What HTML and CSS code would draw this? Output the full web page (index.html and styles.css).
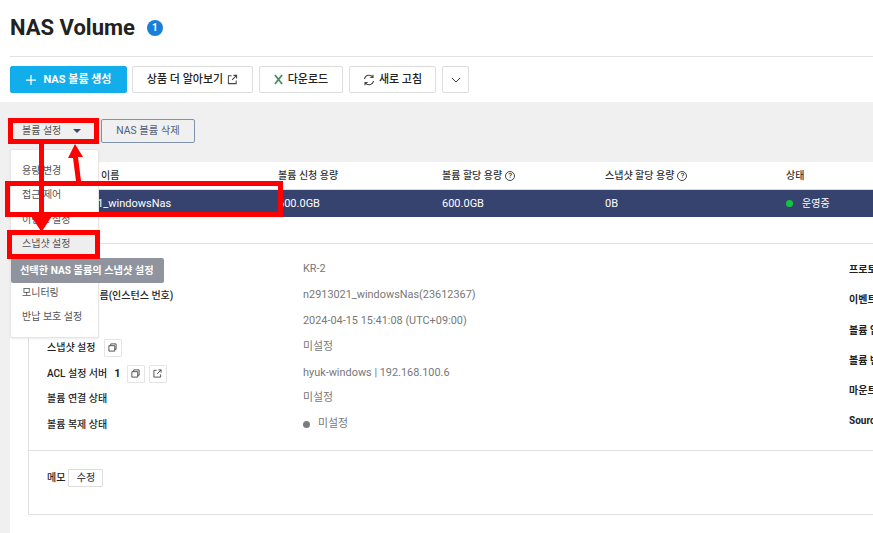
FILE: index.html
```html
<!DOCTYPE html>
<html lang="ko">
<head>
<meta charset="utf-8">
<title>NAS Volume</title>
<link rel="stylesheet" href="styles.css">
</head>
<body>
<div class="page">
  <header class="head">
    <div class="title-row">
      <h1>NAS Volume</h1>
      <span class="badge">1</span>
    </div>
    <div class="toolbar">
      <button class="btn primary"><svg class="plus" viewBox="0 0 12 12"><path d="M6 0v12M0 6h12"/></svg>NAS 볼륨 생성</button>
      <button class="btn w-learn">상품 더 알아보기<svg class="ico small" viewBox="0 0 12 12"><path d="M5 2H1.500v8.500H10V7M7 1.500h3.500V5M10.500 1.500L5.500 6.500"/></svg></button>
      <button class="btn w-down"><svg class="xl" viewBox="0 0 10 12"><path d="M1 1l8 10M9 1L1 11"/></svg>다운로드</button>
      <button class="btn w-refresh"><svg class="ico" viewBox="0 0 12 12"><path d="M1.500 5A4.600 4.600 0 0 1 9.800 3.200M10.500 7A4.600 4.600 0 0 1 2.200 8.800M10 .8v2.700H7.300M2 11.200V8.500h2.700"/></svg>새로 고침</button>
      <button class="btn w-more"><svg class="chev" viewBox="0 0 12 7"><path d="M1 1l5 5 5-5"/></svg></button>
    </div>
  </header>

  <div class="panel">
    <div class="actions">
      <button class="act-setting">볼륨 설정<span class="caret"></span></button>
      <button class="act-delete">NAS 볼륨 삭제</button>
    </div>
    <main class="content">
      <div class="thead">
        <span class="c-name">이름</span>
        <span class="c-a">볼륨 신청 용량</span>
        <span class="c-b">볼륨 할당 용량<i class="q">?</i></span>
        <span class="c-c">스냅샷 할당 용량<i class="q">?</i></span>
        <span>상태</span>
      </div>
      <div class="trow">
        <span class="c-name">n2913021_windowsNas</span>
        <span class="c-a">600.0GB</span>
        <span class="c-b">600.0GB</span>
        <span class="c-c">0B</span>
        <span class="status"><i class="dot green"></i>운영중</span>
      </div>

      <section class="detail">
        <div class="specs">
          <div class="labels">
            <div class="l-row">리전</div>
            <div class="l-row">NAS 볼륨 이름(인스턴스 번호)</div>
            <div class="l-row">생성 일시</div>
            <div class="l-row">스냅샷 설정<span class="sq"><svg viewBox="0 0 10 10"><path d="M1 3h6.500v6H1zM3 3V1h6v6H7.500"/></svg></span></div>
            <div class="l-row">ACL 설정 서버<b class="n">1</b><span class="sq"><svg viewBox="0 0 10 10"><path d="M1 3h6.500v6H1zM3 3V1h6v6H7.500"/></svg></span><span class="sq"><svg viewBox="0 0 10 10"><path d="M4 1.500H1V9h7.500V6M6 1h3v3M9 1L4.500 5.500"/></svg></span></div>
            <div class="l-row">볼륨 연결 상태</div>
            <div class="l-row">볼륨 복제 상태</div>
          </div>
          <div class="values">
            <div class="v-row">KR-2</div>
            <div class="v-row">n2913021_windowsNas(23612367)</div>
            <div class="v-row">2024-04-15 15:41:08 (UTC+09:00)</div>
            <div class="v-row">미설정</div>
            <div class="v-row">hyuk-windows | 192.168.100.6</div>
            <div class="v-row">미설정</div>
            <div class="v-row"><i class="dot gray"></i>미설정</div>
          </div>
          <div class="side">
            <div>프로토콜</div>
            <div>이벤트</div>
            <div>볼륨 암호화</div>
            <div>볼륨 반납</div>
            <div>마운트 정보</div>
            <div>Source</div>
          </div>
        </div>
        <div class="memo">메모<button class="edit">수정</button></div>
      </section>
    </main>
  </div>

  <nav class="menu">
    <div class="m-item">용량 변경</div>
    <div class="m-item">접근 제어</div>
    <div class="m-item">이벤트 설정</div>
    <div class="m-item hover">스냅샷 설정</div>
    <div class="m-item"></div>
    <div class="m-item">모니터링</div>
    <div class="m-item">반납 보호 설정</div>
  </nav>
  <div class="tip">선택한 NAS 볼륨의 스냅샷 설정</div>

  <svg class="marks" viewBox="0 0 873 533">
    <g fill="none" stroke="#f00" stroke-width="5">
      <rect x="10.500" y="120.500" width="86" height="21"/>
      <rect x="7.500" y="183.500" width="273" height="31"/>
      <rect x="9.500" y="232.500" width="88" height="24"/>
    </g>
    <path class="solid" d="M39 144h5v74h-5z"/>
    <path class="solid" d="M31 216h21l-10.500 16z"/>
    <path class="solid" d="M76 181h5l-3-24h5l-8-13-7 14h5z"/>
  </svg>
</div>
</body>
</html>
```
FILE: styles.css
```css
* { box-sizing: border-box; }
html, body { margin: 0; height: 100%; }
body {
  background: #fff;
  color: #222;
  font: 11px/16px Roboto, "Noto Sans CJK KR", sans-serif;
  overflow: hidden;
}
button { font: inherit; margin: 0; cursor: pointer; }
i { font-style: normal; }
.page { position: relative; width: 873px; height: 533px; overflow: hidden; }

.head { height: 102px; padding: 0 0 0 10px; }
.title-row {
  display: flex; align-items: center;
  height: 57px; padding-bottom: 1px;
  border-bottom: 1px solid #e2e2e2;
}
h1 { margin: 0; font-size: 22px; line-height: 28px; font-weight: 700; color: #222; }
.badge {
  display: flex; align-items: center; justify-content: center;
  width: 16px; height: 16px; margin-left: 12px;
  border-radius: 50%; background: #1a7fd8; color: #fff;
  font-size: 10px; font-weight: 700;
}
.toolbar { display: flex; gap: 6px; margin-top: 9px; height: 27px; }
.btn {
  display: flex; align-items: center; justify-content: center; gap: 4px;
  height: 27px; padding: 0;
  background: #fff; border: 1px solid #ddd; border-radius: 2px;
  color: #222; font-weight: 500;
}
.primary { width: 117px; margin-right: -1px; background: #12aeeb; border-color: #12aeeb; color: #fff; font-weight: 700; gap: 8px; }
.w-learn { width: 121px; }
.w-down { width: 84px; gap: 5px; }
.w-refresh { width: 87px; }
.w-more { width: 27px; }
.plus { width: 10px; height: 10px; fill: none; stroke: #fff; stroke-width: 1.500; }
.ico { width: 12px; height: 12px; fill: none; stroke: #444; stroke-width: 1.100; }
.ico.small { width: 11px; height: 11px; }
.xl { width: 9px; height: 11px; fill: none; stroke: #4f8a5e; stroke-width: 2; }
.chev { width: 10px; height: 6px; fill: none; stroke: #333; stroke-width: 1.200; }

.panel { height: 431px; padding-left: 10px; background: #f0f0f0; display: flex; flex-direction: column; }
.actions { display: flex; align-items: center; gap: 3px; height: 60px; padding-bottom: 2px; font-size: 10px; }
.act-setting {
  display: flex; align-items: center; gap: 12px;
  width: 88px; height: 24px; padding: 0 0 0 12px;
  background: #f0f0f0; border: 0; color: #555;
}
.caret { width: 0; height: 0; border: 4px solid transparent; border-top: 4px solid #3a4a6b; border-bottom: 0; }
.act-delete {
  width: 94px; height: 24px; padding: 0; font-size: 10.300px;
  background: #f0f0f0; border: 1px solid #7f93ad; border-radius: 2px; color: #50607a;
}
.content { flex: 1; background: #fff; }
.thead, .trow { display: flex; align-items: center; }
.thead { height: 28px; border-bottom: 1px solid #ddd; font-size: 10px; font-weight: 500; color: #333; }
.trow { height: 27px; background: #36436f; color: #fff; }
.c-name { width: 268px; padding-left: 91px; }
.c-a { width: 164px; }
.c-b { width: 163px; display: flex; align-items: center; }
.c-c { width: 181px; display: flex; align-items: center; }
.trow .c-name { padding-left: 44px; }
.q {
  display: inline-flex; align-items: center; justify-content: center;
  width: 10px; height: 10px; margin-left: 3px;
  border: 1px solid #444; border-radius: 50%; font-size: 8px; line-height: 8px;
}
.dot { display: inline-block; width: 7px; height: 7px; border-radius: 50%; margin-right: 9px; }
.green { background: #11c53d; }
.gray { background: #7d7d7d; margin-right: 8px; }
.status { display: flex; align-items: center; font-size: 10px; }

.detail { margin: 26px 0 0 18px; height: 272px; border: 1px solid #e2e2e2; border-right: 0; }
.specs { display: flex; height: 207px; padding: 13px 0 0 18px; border-bottom: 1px solid #e2e2e2; }
.labels { width: 256px; font-size: 10px; font-weight: 500; color: #222; }
.values { width: 546px; margin-top: -1px; font-size: 10.900px; color: #777; }
.side {
  flex: 1; padding-top: 5px; white-space: nowrap; overflow: hidden;
  font-size: 10px; font-weight: 700; color: #222;
  display: grid; grid-auto-rows: 30.300px; align-content: start;
}
.l-row, .v-row { height: 25.900px; display: flex; align-items: center; white-space: nowrap; }
.sq {
  display: flex; align-items: center; justify-content: center;
  width: 18px; height: 18px; margin-left: 8px;
  border: 1px solid #e4e4e4; border-radius: 1px;
}
.sq svg { width: 9px; height: 9px; fill: none; stroke: #444; stroke-width: 1; }
.sq + .sq { margin-left: 4px; }
.n { margin-left: 7px; font-size: 11px; font-weight: 700; margin-right: -2px; }
.memo { display: flex; align-items: center; padding: 18px 0 0 18px; font-size: 10px; font-weight: 500; }
.edit {
  width: 35px; height: 18px; margin-left: 3px; padding: 0;
  background: #fff; border: 1px solid #ddd; border-radius: 1px; color: #444;
}

.menu {
  position: absolute; left: 10px; top: 149px; width: 89px; height: 189px;
  padding-top: 9px; background: #fff; font-size: 10px;
  border: 1px solid #e6e6e6; border-radius: 2px; box-shadow: 0 1px 2px rgba(0,0,0,.08);
}
.m-item { height: 24.300px; padding-left: 11px; display: flex; align-items: center; color: #555; }
.hover { background: #eee; }
.tip {
  position: absolute; left: 11px; top: 258px; width: 153px; height: 25px;
  padding-left: 9px; display: flex; align-items: center; font-size: 10.200px;
  background: #8f949e; border-radius: 2px; color: #fff; font-weight: 700; white-space: nowrap;
}
.marks { position: absolute; left: 0; top: 0; width: 873px; height: 533px; pointer-events: none; }
.solid { fill: #f00; }
```
